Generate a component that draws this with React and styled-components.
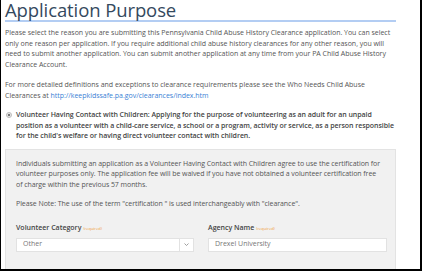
import React from "react";
import styled, { createGlobalStyle } from "styled-components";

const Global = createGlobalStyle`
  html, body { margin: 0; padding: 0; background: #fff; }
  * { box-sizing: border-box; }
`;

const Frame = styled.div`
  width: 422px;
  height: 271px;
  overflow: hidden;
  border-left: 1px solid #000;
  border-right: 2px solid #000;
  border-bottom: 2px solid #000;
  padding: 0 24px 0 4px;
  font-family: "Open Sans", sans-serif;
  color: #555;
  font-size: 7px;
  line-height: 10.5px;
`;

const Title = styled.h1`
  margin: 0;
  font-weight: 400;
  font-size: 18.5px;
  line-height: 20px;
  color: #34495e;
  padding: 0;
  border-bottom: 2px solid #b3cdf3;
  letter-spacing: -0.1px;
`;

const Para = styled.p`
  margin: ${(p) => p.$top || 0}px 0 0 0;
  letter-spacing: -0.02px;
`;

const Link = styled.a`
  color: #3a7fd5;
  text-decoration: none;
`;

const RadioRow = styled.div`
  display: flex;
  gap: 4px;
  margin-top: 9px;
  padding-left: 1px;
`;

const Radio = styled.span`
  flex: none;
  width: 6px;
  height: 6px;
  margin-top: 2px;
  border-radius: 50%;
  border: 1px solid #bbb;
  background: radial-gradient(circle, #777 0 1.3px, #eee 1.6px);
`;

const RadioText = styled.div`
  font-weight: 600;
  color: #444;
  letter-spacing: -0.05px;
  white-space: nowrap;
`;

const Box = styled.div`
  margin-top: 7px;
  background: #f1f1f1;
  border: 1px solid #e3e3e3;
  padding: 9px 1px 20px 10px;
`;

const BoxPara = styled.p`
  margin: ${(p) => p.$top || 0}px 0 0 0;
  letter-spacing: -0.06px;
  white-space: nowrap;
`;

const Fields = styled.div`
  display: grid;
  grid-template-columns: 178px 179px;
  column-gap: 14px;
  margin-top: 13px;
`;

const Field = styled.div`
  display: flex;
  flex-direction: column;
`;

const Label = styled.label`
  font-weight: 600;
  color: #444;
  font-size: 7px;
  line-height: 10px;
  margin-bottom: 4px;
`;

const Req = styled.span`
  font-weight: 400;
  color: #f0a040;
  font-size: 4px;
  margin-left: 2px;
`;

const Control = styled.div`
  display: flex;
  align-items: center;
  height: 14px;
  background: #fff;
  border: 1px solid #e2e2e2;
  color: #777;
  padding-left: 6px;
`;

const Value = styled.span`
  flex: 1;
`;

const Chevron = styled.span`
  flex: none;
  width: 14px;
  height: 100%;
  border-left: 1px solid #e2e2e2;
  display: flex;
  align-items: center;
  justify-content: center;
`;

export default function App() {
  return (
    <>
      <Global />
      <Frame>
        <Title>Application Purpose</Title>
        <Para $top={6}>
          Please select the reason you are submitting this Pennsylvania Child Abuse History Clearance application. You can select
          only one reason per application. If you require additional child abuse history clearances for any other reason, you will
          need to submit another application. You can submit another application at any time from your PA Child Abuse History
          Clearance Account.
        </Para>
        <Para $top={10}>
          For more detailed definitions and exceptions to clearance requirements please see the Who Needs Child Abuse
          Clearances at <Link href="#">http://keepkidssafe.pa.gov/clearances/index.htm</Link>
        </Para>
        <RadioRow>
          <Radio />
          <RadioText>
            Volunteer Having Contact with Children: Applying for the purpose of volunteering as an adult for an unpaid
            <br />
            position as a volunteer with a child-care service, a school or a program, activity or service, as a person responsible
            <br />
            for the child's welfare or having direct volunteer contact with children.
          </RadioText>
        </RadioRow>
        <Box>
          <BoxPara>
            Individuals submitting an application as a Volunteer Having Contact with Children agree to use the certification for
            <br />
            volunteer purposes only. The application fee will be waived if you have not obtained a volunteer certification free
            <br />
            of charge within the previous 57 months.
          </BoxPara>
          <BoxPara $top={9}>
            Please Note: The use of the term "certification " is used interchangeably with "clearance".
          </BoxPara>
          <Fields>
            <Field>
              <Label>
                Volunteer Category<Req>(required)</Req>
              </Label>
              <Control>
                <Value>Other</Value>
                <Chevron>
                  <svg width="5" height="3" viewBox="0 0 5 3">
                    <path d="M0.5 0.5 L2.5 2.5 L4.5 0.5" fill="none" stroke="#888" strokeWidth="0.8" />
                  </svg>
                </Chevron>
              </Control>
            </Field>
            <Field>
              <Label>
                Agency Name<Req>(required)</Req>
              </Label>
              <Control>
                <Value>Drexel University</Value>
              </Control>
            </Field>
          </Fields>
        </Box>
      </Frame>
    </>
  );
}
